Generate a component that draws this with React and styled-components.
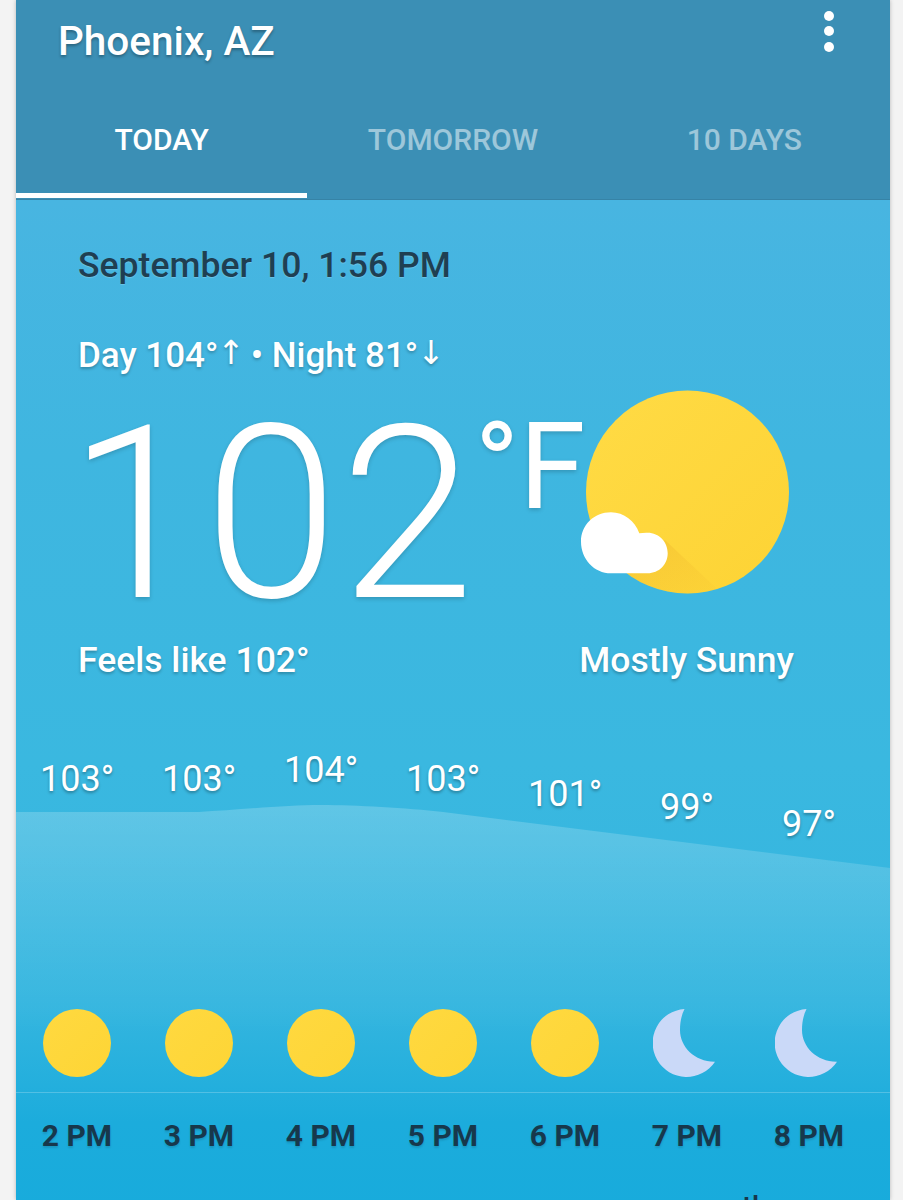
import React from 'react';
import styled, { createGlobalStyle } from 'styled-components';

const GlobalStyle = createGlobalStyle`
  html, body {
    margin: 0;
    height: 1200px;
    overflow: hidden;
    background: #f3f3f3;
    font-family: Roboto, "Noto Sans", sans-serif;
  }
`;

const Card = styled.div`
  width: 874px;
  height: 1200px;
  margin-left: 16px;
  overflow: hidden;
  box-shadow: 0 0 4px rgba(0, 0, 0, 0.25);
  display: flex;
  flex-direction: column;
`;

const Header = styled.header`
  height: 200px;
  flex: none;
  background: #3b8fb5;
  display: flex;
  flex-direction: column;
  box-shadow: inset 0 -1px 0 rgba(0, 0, 0, 0.08);
`;

const TopBar = styled.div`
  height: 98px;
  display: flex;
  justify-content: space-between;
  align-items: flex-start;
  padding: 0 56px 0 42px;
`;

const City = styled.h1`
  margin: 18px 0 0;
  font-size: 40.5px;
  line-height: 46px;
  font-weight: 500;
  color: #fff;
  text-shadow: 0 2px 3px rgba(0, 0, 0, 0.3);
`;

const MenuDots = styled.div`
  margin-top: 11px;
  display: flex;
  flex-direction: column;
  gap: 5.3px;
`;

const Dot = styled.span`
  width: 10px;
  height: 10px;
  border-radius: 50%;
  background: #fff;
`;

const Tabs = styled.nav`
  flex: 1;
  display: grid;
  grid-template-columns: repeat(3, 1fr);
`;

const Tab = styled.div`
  height: 100px;
  box-sizing: border-box;
  padding-top: 23px;
  text-align: center;
  font-size: 30px;
  line-height: 38px;
  font-weight: 500;
  color: ${props => (props.$active ? '#fff' : 'rgba(255, 255, 255, 0.5)')};
  border-bottom: 5px solid ${props => (props.$active ? '#fff' : 'transparent')};
  margin-bottom: 2px;
`;

const Body = styled.main`
  flex: 1;
  position: relative;
  background: linear-gradient(180deg, #48b5e1 0%, #3fb6e0 25%, #3ab8e0 55%, #33b5df 79%, #1cacdc 90%, #17abdc 100%);
  padding-top: 44px;
`;

const DateLine = styled.div`
  margin-left: 62px;
  font-size: 35.6px;
  line-height: 42px;
  font-weight: 500;
  color: #1f3f52;
  text-shadow: 0 1px 1px rgba(255, 255, 255, 0.2);
`;

const Range = styled.div`
  margin: 49px 0 0 62px;
  font-size: 35px;
  line-height: 42px;
  font-weight: 500;
  color: #fff;
  text-shadow: 0 2px 3px rgba(0, 0, 0, 0.25);
`;

const Arrow = styled.span`
  display: inline-block;
  margin: 0 -3px 0 -1px;
  font-family: "DejaVu Sans", sans-serif;
  font-weight: 400;
  font-size: 33px;
  line-height: 30px;
  vertical-align: 3px;
`;

const Hero = styled.section`
  height: 242px;
  display: flex;
  align-items: flex-start;
  margin-top: 20px;
  padding-left: 52px;
`;

const BigTemp = styled.div`
  font-size: 241px;
  line-height: 236px;
  font-weight: 300;
  letter-spacing: 2.5px;
  color: #fff;
  text-shadow: 0 2px 4px rgba(0, 0, 0, 0.18);
`;

const Unit = styled.div`
  margin-left: -2px;
  margin-top: 10px;
  font-size: 120px;
  line-height: 120px;
  font-weight: 400;
  color: #fff;
  text-shadow: 0 2px 4px rgba(0, 0, 0, 0.18);
`;

const SunArt = styled.svg`
  flex: none;
  width: 210px;
  height: 205px;
  margin-left: -5px;
  margin-top: -7px;
`;

const Summary = styled.div`
  display: flex;
  justify-content: space-between;
  padding: 0 96px 0 62px;
  font-size: 35.5px;
  line-height: 42px;
  font-weight: 500;
  color: #fff;
  text-shadow: 0 2px 3px rgba(0, 0, 0, 0.25);
`;

const Forecast = styled.section`
  position: relative;
  margin-top: 60px;
`;

const ChartFill = styled.svg`
  position: absolute;
  left: 0;
  top: 60px;
  width: 874px;
  height: 290px;
`;

const Columns = styled.div`
  position: relative;
  display: grid;
  grid-template-columns: repeat(7, 122px);
`;

const TempCell = styled.div`
  height: 104px;
  box-sizing: border-box;
  padding-top: ${props => props.$drop}px;
  text-align: center;
  font-size: 36px;
  line-height: 40px;
  color: #fff;
  text-shadow: 0 2px 3px rgba(0, 0, 0, 0.3);
`;

const IconCell = styled.div`
  height: 68px;
  margin-top: 164px;
  display: flex;
  justify-content: center;
`;

const SmallSun = styled.div`
  width: 68px;
  height: 68px;
  border-radius: 50%;
  background: linear-gradient(135deg, #ffd940, #fdd535);
`;

const Moon = styled.svg`
  width: 68px;
  height: 68px;
`;

const Divider = styled.div`
  position: relative;
  margin-top: 15px;
  height: 1px;
  background: rgba(255, 255, 255, 0.22);
`;

const TimeCell = styled.div`
  padding-top: 24px;
  text-align: center;
  font-size: 30px;
  line-height: 38px;
  font-weight: 700;
  color: #17384c;
  text-shadow: 0 2px 2px rgba(0, 0, 0, 0.12);
`;

const CutOffLine = styled.div`
  margin-top: 34px;
  padding-left: 726px;
  font-size: 30px;
  line-height: 36px;
  font-weight: 500;
  color: #17384c;
`;

const hours = [
  { temp: 103, time: '2 PM', drop: 18 },
  { temp: 103, time: '3 PM', drop: 18 },
  { temp: 104, time: '4 PM', drop: 9 },
  { temp: 103, time: '5 PM', drop: 18 },
  { temp: 101, time: '6 PM', drop: 33 },
  { temp: 99, time: '7 PM', drop: 46, night: true },
  { temp: 97, time: '8 PM', drop: 63, night: true },
];

const WeatherArt = () => (
  <SunArt viewBox="0 0 210 205">
    <defs>
      <linearGradient id="sunFill" x1="0" y1="0" x2="1" y2="1">
        <stop offset="0" stopColor="#ffdb45" />
        <stop offset="1" stopColor="#fdd334" />
      </linearGradient>
      <linearGradient id="castFill" x1="0" y1="0" x2="1" y2="1">
        <stop offset="0" stopColor="#eeb52c" stopOpacity="0.45" />
        <stop offset="1" stopColor="#eeb52c" stopOpacity="0" />
      </linearGradient>
      <clipPath id="sunClip">
        <circle cx="106.5" cy="102" r="101.5" />
      </clipPath>
    </defs>
    <circle cx="106.5" cy="102" r="101.5" fill="url(#sunFill)" />
    <path d="M84 150 L150 212 L90 212 L40 183 Z" fill="url(#castFill)" clipPath="url(#sunClip)" />
    <path
      d="M30 183.3C13 183.3 0 169 0 151.7C0 135 13 122.3 30 122.3C43 122.3 54 131 58.3 143.3C61 142.8 64 142.6 66.7 142.7C78 142.7 86.7 152 86.7 163.3C86.7 174.5 78 183.3 66.7 183.3Z"
      fill="#fff"
    />
  </SunArt>
);

const MoonIcon = () => (
  <Moon viewBox="0 0 68 68">
    <path
      d="M31.5 0A34 34 0 1 0 62 52.7C42 53 27 38 27 21C27 13 28.5 6 31.5 0Z"
      fill="#cad9f8"
    />
  </Moon>
);

const App = () => (
  <>
    <GlobalStyle />
    <Card>
      <Header>
        <TopBar>
          <City>Phoenix, AZ</City>
          <MenuDots>
            <Dot />
            <Dot />
            <Dot />
          </MenuDots>
        </TopBar>
        <Tabs>
          <Tab $active>TODAY</Tab>
          <Tab>TOMORROW</Tab>
          <Tab>10 DAYS</Tab>
        </Tabs>
      </Header>
      <Body>
        <DateLine>September 10, 1:56 PM</DateLine>
        <Range>Day 104°<Arrow>↑</Arrow> • Night 81°<Arrow>↓</Arrow></Range>
        <Hero>
          <BigTemp>102</BigTemp>
          <Unit>°F</Unit>
          <WeatherArt />
        </Hero>
        <Summary>
          <span>Feels like 102°</span>
          <span>Mostly Sunny</span>
        </Summary>
        <Forecast>
          <ChartFill viewBox="0 0 874 290" preserveAspectRatio="none">
            <defs>
              <linearGradient id="areaFill" x1="0" y1="0" x2="0" y2="1">
                <stop offset="0" stopColor="#fff" stopOpacity="0.2" />
                <stop offset="0.8" stopColor="#fff" stopOpacity="0" />
              </linearGradient>
            </defs>
            <path
              d="M0 11L183 11C220 9 270 4 305 4C340 4 390 7 427 11L874 67L874 290L0 290Z"
              fill="url(#areaFill)"
            />
          </ChartFill>
          <Columns>
            {hours.map(hour => (
              <TempCell key={hour.time} $drop={hour.drop}>{hour.temp}°</TempCell>
            ))}
            {hours.map(hour => (
              <IconCell key={hour.time}>
                {hour.night ? <MoonIcon /> : <SmallSun />}
              </IconCell>
            ))}
          </Columns>
          <Divider />
          <Columns>
            {hours.map(hour => (
              <TimeCell key={hour.time}>{hour.time}</TimeCell>
            ))}
          </Columns>
          <CutOffLine>th</CutOffLine>
        </Forecast>
      </Body>
    </Card>
  </>
);

export default App;
